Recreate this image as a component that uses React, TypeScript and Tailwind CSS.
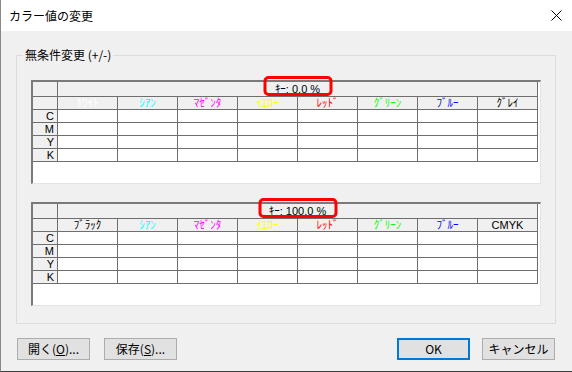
import React from "react";

const F = { fontFamily: '"Noto Sans CJK JP", "Noto Sans", sans-serif' };
const CELL = { fontFamily: '"Liberation Sans", "Noto Sans CJK JP", sans-serif' };

type Col = { label: string; color: string };

const cols1: Col[] = [
  { label: "ﾎﾜｲﾄ", color: "#ffffff" },
  { label: "ｼｱﾝ", color: "#00ffff" },
  { label: "ﾏｾﾞﾝﾀ", color: "#ff00ff" },
  { label: "ｲｴﾛｰ", color: "#ffff00" },
  { label: "ﾚｯﾄﾞ", color: "#ff0000" },
  { label: "ｸﾞﾘｰﾝ", color: "#00ff00" },
  { label: "ﾌﾞﾙｰ", color: "#0000ff" },
  { label: "ｸﾞﾚｲ", color: "#000000" },
];
const cols2: Col[] = [
  { label: "ﾌﾞﾗｯｸ", color: "#000000" },
  { label: "ｼｱﾝ", color: "#00ffff" },
  { label: "ﾏｾﾞﾝﾀ", color: "#ff00ff" },
  { label: "ｲｴﾛｰ", color: "#ffff00" },
  { label: "ﾚｯﾄﾞ", color: "#ff0000" },
  { label: "ｸﾞﾘｰﾝ", color: "#00ff00" },
  { label: "ﾌﾞﾙｰ", color: "#0000ff" },
  { label: "CMYK", color: "#000000" },
];

function Table({ keyText, cols, boxW }: { keyText: string; cols: Col[]; boxW: number }) {
  const rows = ["C", "M", "Y", "K"];
  return (
    <div
      className="w-[510px] h-[104px] bg-white border-t-2 border-l-2 border-[#7a7a7a] border-r border-b border-r-[#e3e3e3] border-b-[#e3e3e3]"
      style={CELL}
    >
      <div className="grid grid-cols-[25px_repeat(8,60px)] w-[505px]">
        <div className="h-[15px] bg-[#f0f0f0] border-r border-b border-[#6e6e6e]" />
        <div className="col-span-8 h-[15px] bg-[#f0f0f0] border-r border-b border-[#6e6e6e] relative flex items-center justify-center">
          <span className="text-[11px] leading-[12px] text-black">{keyText}</span>
          <div
            className="absolute left-1/2 -translate-x-1/2 top-[-6px] h-[20px] border-[3px] border-[#ff0000] rounded-[5px]"
            style={{ width: boxW }}
          />
        </div>
        <div className="h-[13px] bg-[#f0f0f0] border-r border-b border-[#6e6e6e]" />
        {cols.map((c, i) => (
          <div
            key={i}
            className="h-[13px] bg-[#f0f0f0] border-r border-b border-[#6e6e6e] flex items-center justify-center text-[11px] leading-[12px] overflow-hidden"
            style={{ color: c.color }}
          >
            {c.label}
          </div>
        ))}
        {rows.map((r) => (
          <React.Fragment key={r}>
            <div className="h-[13px] bg-[#f0f0f0] border-r border-b border-[#6e6e6e] flex items-center justify-end pr-[3px] text-[11px] leading-[12px] text-black overflow-hidden">
              {r}
            </div>
            {cols.map((_, i) => (
              <div key={i} className="h-[13px] bg-white border-r border-b border-[#6e6e6e]" />
            ))}
          </React.Fragment>
        ))}
      </div>
    </div>
  );
}

function Btn({ children, primary }: { children: React.ReactNode; primary?: boolean }) {
  return (
    <div
      className={
        "w-[73px] h-[22px] bg-[#e1e1e1] flex items-center justify-center text-[12px] text-black " +
        (primary ? "border-2 border-[#0078d7]" : "border border-[#adadad]")
      }
    >
      {children}
    </div>
  );
}

export default function App() {
  return (
    <div
      className="w-[572px] h-[372px] bg-[#f0f0f0] flex flex-col border-l border-[#8a8a8a] border-b border-b-[#3c3c3c] overflow-hidden"
      style={F}
    >
      <div className="h-[31px] bg-white flex items-center justify-between pl-[8px] pr-[10px] shrink-0">
        <span className="text-[12px] text-black">カラー値の変更</span>
        <svg width="11" height="11" viewBox="0 0 11 11">
          <path d="M0.5 0.5 L10.5 10.5 M10.5 0.5 L0.5 10.5" stroke="#000" strokeWidth="1" />
        </svg>
      </div>
      <div className="pl-[15px] pt-[24px]">
        <div className="relative w-[540px] h-[269px] border border-[#dcdcdc] pl-[14px] pt-[24px] flex flex-col gap-[18px]">
          <span className="absolute left-[6px] top-[-9px] bg-[#f0f0f0] px-[2px] text-[12px] leading-[16px] text-black">
            無条件変更 (+/-)
          </span>
          <Table keyText="ｷｰ: 0.0 %" cols={cols1} boxW={69} />
          <Table keyText="ｷｰ: 100.0 %" cols={cols2} boxW={79} />
        </div>
        <div className="flex mt-[14px] pl-[1px]">
          <div className="flex gap-[14px]">
            <Btn>
              開く(<span className="underline">O</span>)...
            </Btn>
            <Btn>
              保存(<span className="underline">S</span>)...
            </Btn>
          </div>
          <div className="flex gap-[12px] ml-[220px]">
            <Btn primary>OK</Btn>
            <Btn>キャンセル</Btn>
          </div>
        </div>
      </div>
    </div>
  );
}
